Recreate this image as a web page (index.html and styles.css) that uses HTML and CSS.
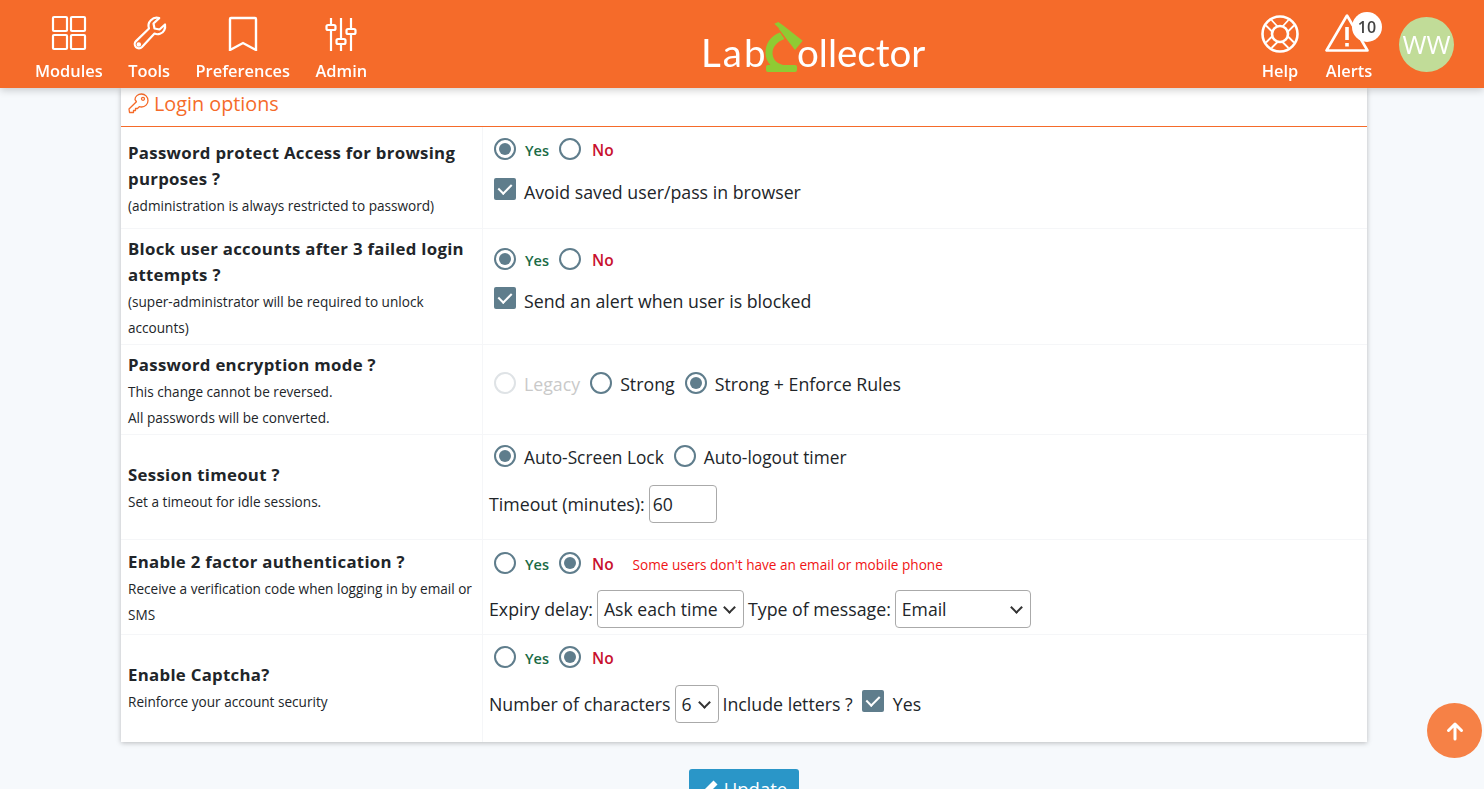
FILE: index.html
```html
<!DOCTYPE html>
<html lang="en">
<head>
    <meta charset="UTF-8">
    <title>LabCollector - Login options</title>
    <link rel="stylesheet" href="styles.css">
</head>
<body>
    <div class="topbar">
        <div class="nav-group">
            <a class="nav-item nav-modules">
                <svg width="36" height="36" viewBox="0 0 36 36" fill="none" stroke="#fff" stroke-width="2.2"><rect x="2" y="2" width="14" height="14" rx="1"/><rect x="20" y="2" width="14" height="14" rx="1"/><rect x="2" y="20" width="14" height="14" rx="1"/><rect x="20" y="20" width="14" height="14" rx="1"/></svg>
                <span>Modules</span>
            </a>
            <a class="nav-item nav-tools">
                <svg width="36" height="36" viewBox="0 0 36 36" fill="none" stroke="#fff" stroke-width="2.2" stroke-linejoin="round"><path d="M34 9.500c.8 4-1.200 8-5 9.300-2 .7-4 .5-5.500-.2L11 32c-1.700 1.700-4.300 1.700-6 .1-1.700-1.700-1.700-4.300 0-6L18 13.500c-1-2.800-.4-6 1.900-8.300C22.200 2.900 25.400 2.200 28.200 3.100L22.500 8.500l1 5 5 1z"/><circle cx="7.800" cy="29.500" r="1.200"/></svg>
                <span>Tools</span>
            </a>
            <a class="nav-item nav-prefs">
                <svg width="36" height="36" viewBox="0 0 36 36" fill="none" stroke="#fff" stroke-width="2.4"><path d="M5 4c0-.5.5-1 1-1h24c.5 0 1 .5 1 1v31l-13-7-13 7z"/></svg>
                <span>Preferences</span>
            </a>
            <a class="nav-item nav-admin">
                <svg width="36" height="36" viewBox="0 0 36 36" fill="none" stroke="#fff" stroke-width="2.2"><path d="M8 3v7M8 15v21M18 3v21M18 29v7M28 3v11M28 19v17"/><rect x="3.500" y="10" width="9" height="5" rx="1.500"/><rect x="13.500" y="24" width="9" height="5" rx="1.500"/><rect x="23.500" y="14" width="9" height="5" rx="1.500"/></svg>
                <span>Admin</span>
            </a>
        </div>

        <div class="logo">
            <span class="logo-lab">Lab</span>
            <svg class="logo-mark" width="38" height="50" viewBox="0 0 38 50" fill="#8fcb33"><path d="M9.300 1.800L13.300 0l5 3.500 19.400 15.200-7.700 9.300L13.300 6.300l1.700 1z"/><path d="M15 10.500C5 14 .5 22 .5 31c0 5 2 9 5 12H18c-7.500-2-10.500-7-10.500-12 0-6 4-11 12-14z"/><rect x="1" y="43" width="31" height="7" rx="2"/></svg>
            <span>ollector</span>
        </div>

        <div class="nav-group nav-right">
            <a class="nav-item nav-help">
                <svg width="38" height="38" viewBox="0 0 38 38" fill="none" stroke="#fff" stroke-width="2.6"><circle cx="19" cy="19" r="17.500"/><circle cx="19" cy="19" r="8"/><path d="M10.500 5l6 6.500M27.500 5l-6 6.500M5 10.500l6 6M33 10.500l-6 6M5 27.500l6-6M33 27.500l-6-6M10.500 33l6-6M27.500 33l-6-6" stroke-width="1.800"/></svg>
                <span>Help</span>
            </a>
            <a class="nav-item nav-alerts">
                <svg width="44" height="38" viewBox="0 0 44 38" fill="none" stroke="#fff" stroke-width="2.6" stroke-linejoin="round"><path d="M22 1.500L1.500 36.500h41z"/><path d="M22 13v13" stroke-width="3.600"/><path d="M22 29v3.500" stroke-width="3.600"/></svg>
                <span>Alerts</span>
                <b class="badge">10</b>
            </a>
            <div class="avatar">WW</div>
        </div>
    </div>

    <div class="page">
        <div class="card">
            <h2 class="card-title">
                <svg width="21" height="21" viewBox="0 0 21 21" fill="none" stroke="#f56b2a" stroke-width="1.300" stroke-linejoin="round"><path d="M13.500 1c3.600 0 6.500 2.900 6.500 6.500S17.100 14 13.500 14c-.8 0-1.500-.1-2.200-.4L9.500 15.500H7.500V17.500H5.500V19.500H1.500L1 16l7.400-7.300C8.100 8 7 7.200 7 6.500 7 3.500 9.900 1 13.500 1z"/><circle cx="15" cy="5.800" r="1.500"/></svg>
                Login options
            </h2>

            <div class="row row-a">
                <div class="label">
                    <strong>Password protect Access for browsing purposes ?</strong>
                    <small>(administration is always restricted to password)</small>
                </div>
                <div class="field">
                    <div class="line">
                        <span class="radio on"></span><span class="yes">Yes</span>
                        <span class="radio"></span><span class="no">No</span>
                    </div>
                    <div class="line">
                        <span class="check"></span><span class="txt">Avoid saved user/pass in browser</span>
                    </div>
                </div>
            </div>

            <div class="row row-b">
                <div class="label">
                    <strong>Block user accounts after 3 failed login attempts ?</strong>
                    <small>(super-administrator will be required to unlock accounts)</small>
                </div>
                <div class="field">
                    <div class="line">
                        <span class="radio on"></span><span class="yes">Yes</span>
                        <span class="radio"></span><span class="no">No</span>
                    </div>
                    <div class="line">
                        <span class="check"></span><span class="txt">Send an alert when user is blocked</span>
                    </div>
                </div>
            </div>

            <div class="row row-c">
                <div class="label">
                    <strong>Password encryption mode ?</strong>
                    <small>This change cannot be reversed.<br>All passwords will be converted.</small>
                </div>
                <div class="field">
                    <div class="line">
                        <span class="radio off"></span><span class="txt muted">Legacy</span>
                        <span class="radio"></span><span class="txt">Strong</span>
                        <span class="radio on"></span><span class="txt">Strong + Enforce Rules</span>
                    </div>
                </div>
            </div>

            <div class="row row-d">
                <div class="label">
                    <strong>Session timeout ?</strong>
                    <small>Set a timeout for idle sessions.</small>
                </div>
                <div class="field">
                    <div class="line line-small">
                        <span class="radio on"></span><span class="txt">Auto-Screen Lock</span>
                        <span class="radio"></span><span class="txt">Auto-logout timer</span>
                    </div>
                    <div class="line line-form">
                        <span>Timeout (minutes):</span>
                        <input class="input" type="text" value="60">
                    </div>
                </div>
            </div>

            <div class="row row-e">
                <div class="label">
                    <strong>Enable 2 factor authentication ?</strong>
                    <small>Receive a verification code when logging in by email or SMS</small>
                </div>
                <div class="field">
                    <div class="line">
                        <span class="radio"></span><span class="yes">Yes</span>
                        <span class="radio on"></span><span class="no">No</span>
                        <span class="warn">Some users don't have an email or mobile phone</span>
                    </div>
                    <div class="line line-form">
                        <span>Expiry delay:</span>
                        <span class="select sel-delay">Ask each time</span>
                        <span>Type of message:</span>
                        <span class="select sel-type">Email</span>
                    </div>
                </div>
            </div>

            <div class="row row-f">
                <div class="label">
                    <strong>Enable Captcha?</strong>
                    <small>Reinforce your account security</small>
                </div>
                <div class="field">
                    <div class="line">
                        <span class="radio"></span><span class="yes">Yes</span>
                        <span class="radio on"></span><span class="no">No</span>
                    </div>
                    <div class="line line-form">
                        <span>Number of characters</span>
                        <span class="select sel-num">6</span>
                        <span>Include letters ?</span>
                        <span class="check"></span><span class="txt">Yes</span>
                    </div>
                </div>
            </div>
        </div>

        <div class="actions">
            <button class="btn-update">
                <svg width="18" height="18" viewBox="0 0 18 18" fill="#fff"><path d="M12.500 1.500l4 4L6 16H2v-4z"/></svg>
                Update
            </button>
        </div>
    </div>

    <a class="to-top">
        <svg width="20" height="20" viewBox="0 0 20 20" fill="none" stroke="#fff" stroke-width="3" stroke-linecap="round" stroke-linejoin="round"><path d="M10 18V3M3.500 9.500L10 3l6.500 6.500"/></svg>
    </a>
</body>
</html>
```

FILE: styles.css
```css
* {
    margin: 0;
    padding: 0;
    box-sizing: border-box;
}

html, body {
    height: 100%;
    overflow: hidden;
}

body {
    font-family: "Open Sans", "Noto Sans", sans-serif;
    background: #f6f9fc;
    color: #212529;
}

.topbar {
    position: fixed;
    top: 0;
    left: 0;
    right: 0;
    height: 88px;
    background: #f56b2a;
    box-shadow: 0 2px 8px rgba(0,0,0,0.2);
    display: flex;
    justify-content: space-between;
    z-index: 10;
}

.nav-group {
    display: flex;
    padding-left: 35px;
    gap: 25.5px;
}

.nav-item {
    display: flex;
    flex-direction: column;
    align-items: center;
    color: #fff;
    font-weight: 600;
    font-size: 16.4px;
    line-height: 22px;
    padding-top: 15px;
    position: relative;
}

.nav-item span {
    margin-top: 9px;
}

.nav-help span {
    margin-top: 7px;
}

.nav-alerts span {
    margin-top: 8px;
}

.nav-alerts svg {
    margin: -1px 4px 0 0;
}

.logo {
    position: absolute;
    left: 701px;
    top: 22px;
    display: flex;
    align-items: flex-end;
    height: 50px;
    color: #fff;
    font-family: Lato, "Open Sans", sans-serif;
    font-weight: 400;
    font-size: 38.5px;
    line-height: 39px;
}

.logo-lab {
    width: 64px;
    letter-spacing: 2px;
}

.logo-mark {
    margin-right: -6px;
}

.nav-right {
    padding: 0 30px 0 0;
    gap: 26px;
}

.badge {
    position: absolute;
    top: 12px;
    left: 27px;
    width: 30px;
    height: 30px;
    border-radius: 50%;
    background: #fff;
    color: #444;
    font-size: 16px;
    font-weight: 600;
    line-height: 30px;
    text-align: center;
}

.avatar {
    width: 55px;
    height: 55px;
    margin-top: 17px;
    border-radius: 50%;
    background: #c1dc98;
    color: #fff;
    font-size: 26px;
    font-weight: 500;
    line-height: 55px;
    text-align: center;
}

.page {
    padding: 88px 117px 0 121px;
}

.card {
    background: #fff;
    box-shadow: 0 1px 5px rgba(0,0,0,0.25);
}

.card-title {
    height: 39px;
    padding: 0 0 7px 7px;
    border-bottom: 1px solid #f56b2a;
    color: #f56b2a;
    font-size: 19.8px;
    font-weight: 500;
    line-height: 27px;
    display: flex;
    align-items: center;
    gap: 5px;
}

.row {
    display: grid;
    grid-template-columns: 362px 1fr;
    border-bottom: 1px solid #f5f6f8;
}

.row:last-child {
    border-bottom: none;
}

.row-a { height: 102px; }
.row-b { height: 116px; }
.row-c { height: 90px; }
.row-d { height: 105px; }
.row-e { height: 95px; }
.row-f { height: 107px; }

.label {
    padding: 3px 7px 0;
    border-right: 1px solid #f5f6f8;
    display: flex;
    flex-direction: column;
    justify-content: center;
}

.row-f .label {
    padding: 0 7px 1px;
}

.label strong {
    font-size: 16.8px;
    font-weight: 700;
    line-height: 26px;
    letter-spacing: 0.3px;
}

.label small {
    font-size: 13.6px;
    line-height: 26px;
    margin-top: 1px;
}

.field {
    padding: 8px 6px 0 6px;
    font-size: 17.75px;
    display: flex;
    flex-direction: column;
    justify-content: flex-start;
}

.line {
    display: flex;
    align-items: center;
    padding-left: 5px;
    height: 30px;
}

.line-small {
    font-size: 17.3px;
}

.row-a .line + .line {
    margin-top: 12px;
}

.row-b .line + .line {
    margin-top: 11px;
}

.row-b .field {
    padding-top: 16px;
}

.row-c .field {
    padding-top: 24px;
}

.row-d .field {
    padding-top: 7px;
}

.row-e .field {
    padding-top: 9px;
}

.line-form {
    padding-left: 0;
    height: 38px;
    margin-top: 12px;
    gap: 4px;
}

.row-d .line-form {
    margin-top: 13px;
}

.row-e .line-form {
    margin-top: 11px;
}

.radio {
    width: 22px;
    height: 22px;
    border: 2px solid #5f7d8c;
    border-radius: 50%;
    background: #fff;
    margin-right: 8px;
    flex: none;
    position: relative;
    top: -1px;
}

.radio.on::after {
    content: "";
    display: block;
    width: 12px;
    height: 12px;
    margin: 3px;
    border-radius: 50%;
    background: #5f7d8c;
}

.radio.off {
    border-color: #dfe3e6;
}

.yes, .no {
    font-weight: 600;
    margin-right: 10px;
}

.yes {
    color: #1a6b45;
    font-size: 14.5px;
    margin-left: 1px;
}

.no {
    color: #c8102e;
    font-size: 15.5px;
    margin-left: 3px;
}

.txt {
    margin-right: 10px;
}

.muted {
    color: #c9c9c9;
}

.warn {
    color: #f01414;
    font-size: 13.6px;
    margin-left: 9px;
}

.check {
    width: 22px;
    height: 22px;
    border-radius: 2px;
    background: #5f7d8c;
    margin-right: 8px;
    flex: none;
    position: relative;
    top: -3px;
}

.line-form .check {
    margin-right: 5px;
}

.check::after {
    content: "";
    position: absolute;
    left: 7px;
    top: 3px;
    width: 6px;
    height: 11px;
    border: solid #fff;
    border-width: 0 2px 2px 0;
    transform: rotate(45deg);
}

.input, .select {
    height: 38px;
    border: 1px solid #aaa;
    border-radius: 4px;
    background: #fff;
    font-family: inherit;
    font-size: 17.6px;
    color: #212529;
    padding: 0 6px;
    line-height: 36px;
}

.input {
    width: 68px;
    padding: 0 3px;
}

.select {
    display: inline-block;
    position: relative;
}

.select::after {
    content: "";
    position: absolute;
    right: 9px;
    top: 12px;
    width: 7px;
    height: 7px;
    border: solid #333;
    border-width: 0 2px 2px 0;
    transform: rotate(45deg);
}

.sel-delay { width: 147px; }
.sel-type { width: 136px; }
.sel-num { width: 44px; }

.sel-num + span {
    margin-right: 5px;
}

.actions {
    text-align: center;
    margin-top: 27px;
}

.btn-update {
    width: 110px;
    height: 38px;
    border: none;
    border-radius: 3px;
    background: #2a96c8;
    color: #fff;
    font-family: inherit;
    font-size: 18.5px;
    display: inline-flex;
    align-items: center;
    justify-content: center;
    gap: 5px;
}

.to-top {
    position: fixed;
    right: 2px;
    top: 703px;
    width: 55px;
    height: 55px;
    border-radius: 50%;
    background: #f68146;
    display: flex;
    align-items: center;
    justify-content: center;
}
```
